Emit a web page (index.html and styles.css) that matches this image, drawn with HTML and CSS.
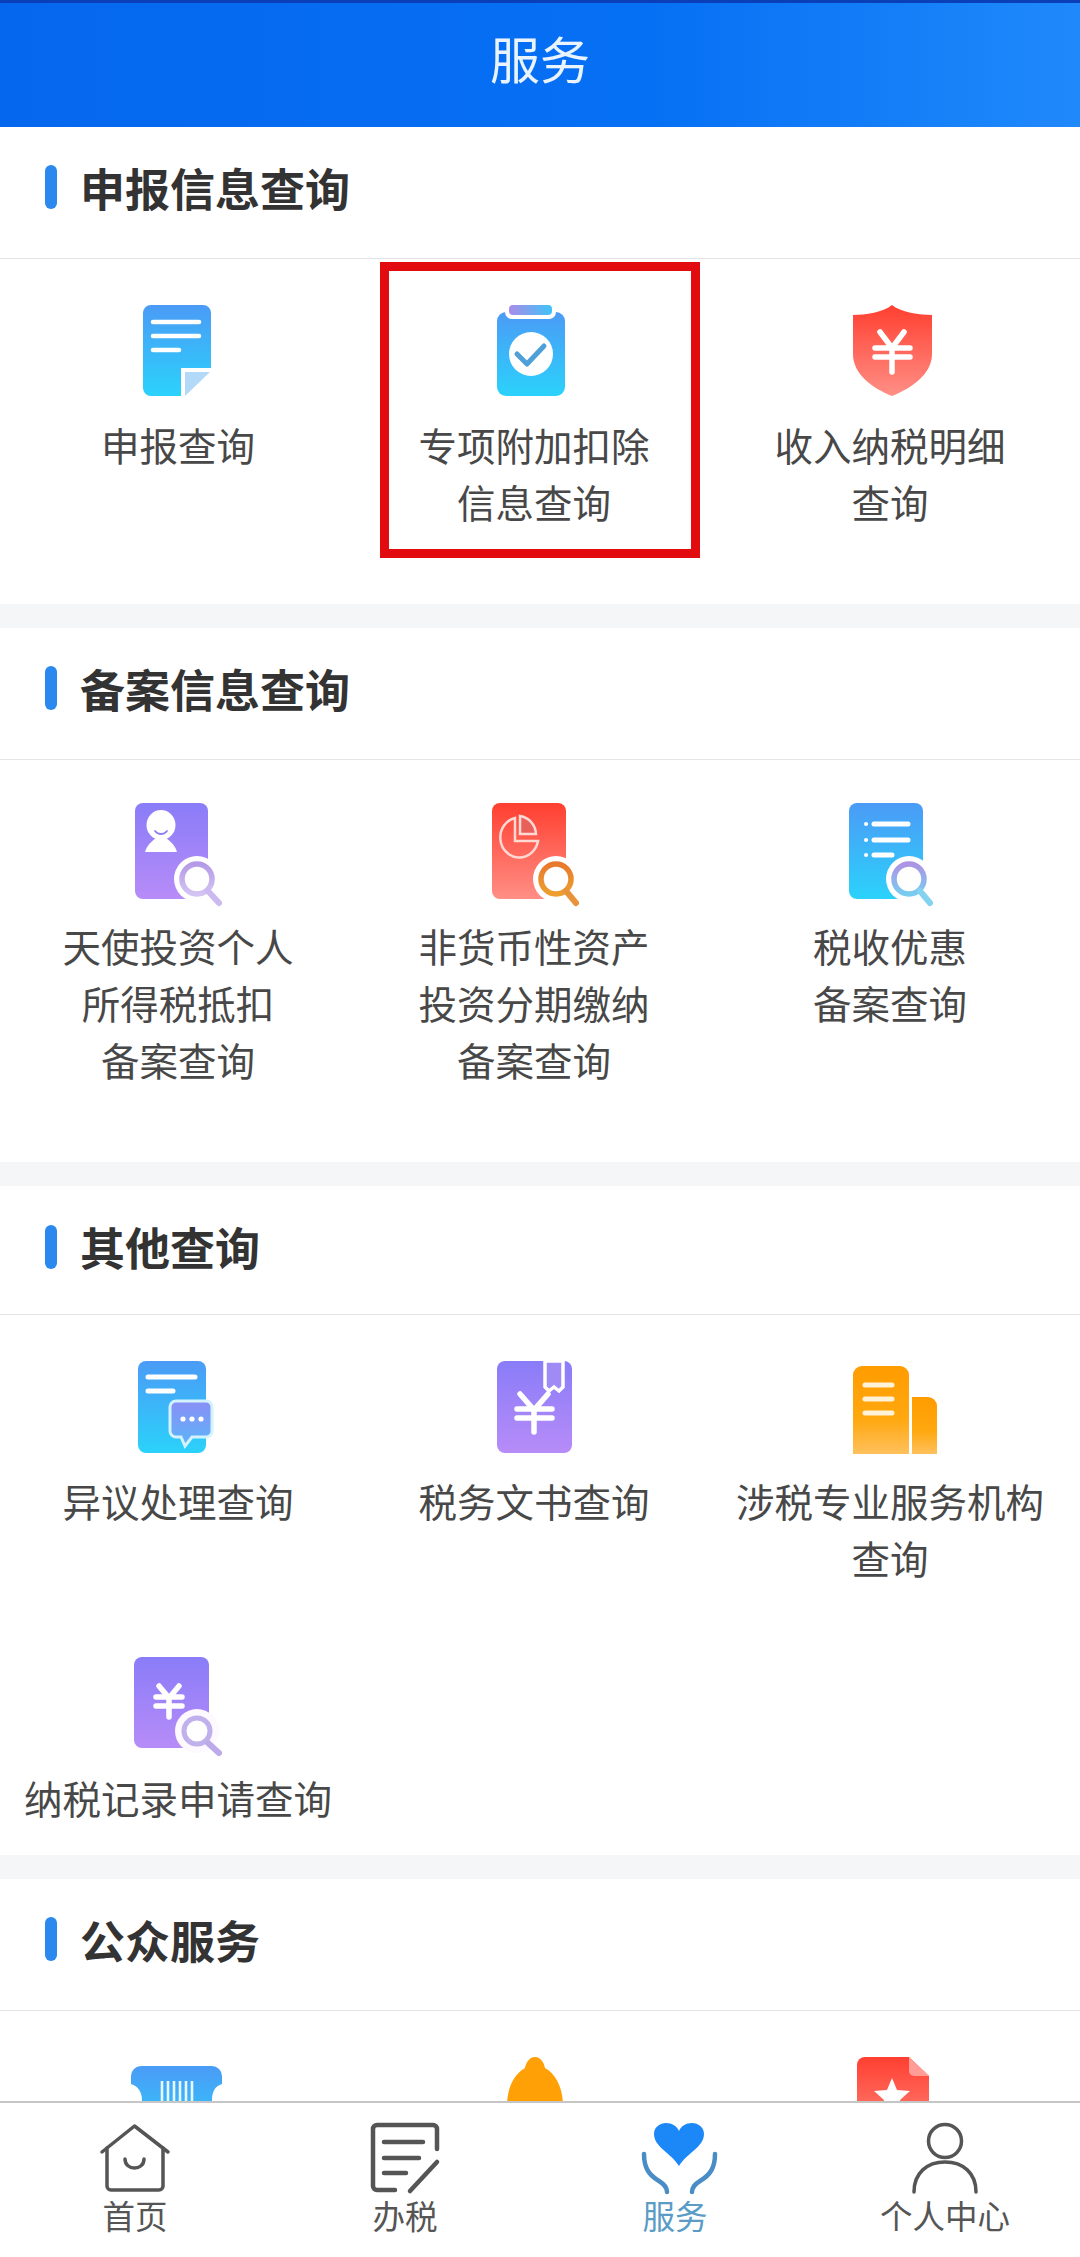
FILE: index.html
```html
<!DOCTYPE html>
<html lang="zh-CN">
<head>
<meta charset="utf-8">
<title>服务</title>
<link rel="stylesheet" href="styles.css">
</head>
<body>
<svg class="defs" aria-hidden="true">
  <defs>
    <linearGradient id="gBlue" x1="0" y1="0" x2="0" y2="1"><stop offset="0" stop-color="#4b9bf6"/><stop offset="1" stop-color="#2bd2fb"/></linearGradient>
    <linearGradient id="gPurple" x1="0" y1="0" x2="0" y2="1"><stop offset="0" stop-color="#8a7cf8"/><stop offset="1" stop-color="#b78cf8"/></linearGradient>
    <linearGradient id="gRed" x1="0" y1="0" x2="0" y2="1"><stop offset="0" stop-color="#ff3f30"/><stop offset="1" stop-color="#ff8f86"/></linearGradient>
    <linearGradient id="gOrange" x1="0" y1="0" x2="0" y2="1"><stop offset="0" stop-color="#ff9c00"/><stop offset=".6" stop-color="#ffa80f"/><stop offset="1" stop-color="#ffc05c"/></linearGradient>
    <linearGradient id="gClip" x1="0" y1="0" x2="1" y2="0"><stop offset="0" stop-color="#a98be8"/><stop offset="1" stop-color="#3fc4f8"/></linearGradient>
    <linearGradient id="gBubble" x1="0" y1="0" x2="0" y2="1"><stop offset="0" stop-color="#8a8ff6"/><stop offset="1" stop-color="#5cb4f8"/></linearGradient>
    <linearGradient id="gLens" x1="0" y1="0" x2="0" y2="1"><stop offset="0" stop-color="#b49ae6"/><stop offset="1" stop-color="#d3c4f3"/></linearGradient>
    <linearGradient id="gLensOrange" x1="0" y1="0" x2="0" y2="1"><stop offset="0" stop-color="#e8782e"/><stop offset="1" stop-color="#eda02e"/></linearGradient>
    <linearGradient id="gLensBlue" x1="0" y1="0" x2="0" y2="1"><stop offset="0" stop-color="#ad93e4"/><stop offset="1" stop-color="#78cdf0"/></linearGradient>
  </defs>
</svg>

<div class="app">
  <header class="topbar"><h1 class="topbar-title">服务</h1></header>

  <main class="scroll">
    <section class="section">
      <h2 class="section-head"><span class="section-bar"></span>申报信息查询</h2>
      <div class="grid">
        <a class="item">
          <svg class="item-icon" viewBox="0 0 120 110">
            <path d="M33 1H85a8 8 0 0 1 8 8V64H63V92H33a8 8 0 0 1-8-8V9a8 8 0 0 1 8-8z" fill="url(#gBlue)"/>
            <path d="M67 68H92L67 92z" fill="#b2daf8"/>
            <path d="M35 18H81M35 32H81M35 46H61" class="w-line" stroke-width="4.5"/>
          </svg>
          <span class="item-label">申报查询</span>
        </a>
        <a class="item item--marked">
          <svg class="item-icon" viewBox="0 0 120 110">
            <rect x="23" y="8" width="68" height="84" rx="9" fill="url(#gBlue)"/>
            <rect x="31" y="-3" width="51" height="18" rx="7" fill="#fff"/>
            <rect x="35" y="1" width="43" height="10" rx="4" fill="url(#gClip)"/>
            <circle cx="57" cy="50" r="22" fill="#fff"/>
            <path d="M43 50L53 60L70 42" fill="none" stroke="#4f9fd8" stroke-width="5" stroke-linecap="round" stroke-linejoin="round"/>
          </svg>
          <span class="item-label">专项附加扣除<br>信息查询</span>
        </a>
        <a class="item">
          <svg class="item-icon" viewBox="0 0 120 110">
            <path d="M62 1C70 8 90 11 102 11V50C102 70 82 84 62 92C42 84 23 70 23 50V11C35 11 54 8 62 1Z" fill="url(#gRed)"/>
            <path d="M50 28L62 44L74 28M45 44H80M45 53H80M62 44V68" class="w-line" stroke-width="5.5"/>
          </svg>
          <span class="item-label">收入纳税明细<br>查询</span>
        </a>
      </div>
    </section>

    <section class="section">
      <h2 class="section-head"><span class="section-bar"></span>备案信息查询</h2>
      <div class="grid">
        <a class="item">
          <svg class="item-icon" viewBox="0 2 120 110">
            <rect x="17" y="0" width="73" height="96" rx="8" fill="url(#gPurple)"/>
            <ellipse cx="43" cy="22" rx="14.5" ry="15" fill="#fff"/>
            <path d="M27 49C29 42 34 38 38 35H48C52 38 57 42 59 49z" fill="#fff"/>
            <path d="M37 28C40 32 46 32 49 28" fill="none" stroke="#8f80f0" stroke-width="1.8" stroke-linecap="round"/>
            <circle cx="79" cy="76" r="23" fill="#fff"/>
            <circle cx="79" cy="76" r="15" fill="#fff" stroke="url(#gLens)" stroke-width="5.5"/>
            <path d="M90 88L101 100" fill="none" stroke="#cbb9f0" stroke-width="6" stroke-linecap="round"/>
          </svg>
          <span class="item-label">天使投资个人<br>所得税抵扣<br>备案查询</span>
        </a>
        <a class="item">
          <svg class="item-icon" viewBox="0 2 120 110">
            <rect x="18" y="0" width="74" height="96" rx="8" fill="url(#gRed)"/>
            <path d="M41 15A19 20 0 1 0 64 38H41z" fill="none" stroke="#ffd9d4" stroke-width="2.5"/>
            <path d="M46 13A19 19 0 0 1 62 31H46z" fill="#e8605a" stroke="#ffd9d4" stroke-width="2.5"/>
            <circle cx="82" cy="76" r="23" fill="#fff"/>
            <circle cx="82" cy="76" r="15" fill="#fff" stroke="url(#gLensOrange)" stroke-width="5.5"/>
            <path d="M92 88L102 100" fill="none" stroke="#e8923a" stroke-width="6" stroke-linecap="round"/>
          </svg>
          <span class="item-label">非货币性资产<br>投资分期缴纳<br>备案查询</span>
        </a>
        <a class="item">
          <svg class="item-icon" viewBox="0 2 120 110">
            <rect x="19" y="0" width="74" height="96" rx="8" fill="url(#gBlue)"/>
            <path d="M44 21H78M44 37H78M44 52H62" class="w-line" stroke-width="5"/>
            <path d="M36 21h.1M36 37h.1M36 52h.1" class="w-line" stroke-width="4"/>
            <circle cx="79" cy="76" r="23" fill="#fff"/>
            <circle cx="79" cy="76" r="15" fill="#fff" stroke="url(#gLensBlue)" stroke-width="5.5"/>
            <path d="M90 88L100 100" fill="none" stroke="#83d2f0" stroke-width="6" stroke-linecap="round"/>
          </svg>
          <span class="item-label">税收优惠<br>备案查询</span>
        </a>
      </div>
    </section>

    <section class="section section--flush">
      <h2 class="section-head"><span class="section-bar"></span>其他查询</h2>
      <div class="grid">
        <a class="item">
          <svg class="item-icon" viewBox="0 0 120 110">
            <rect x="20" y="1" width="68" height="92" rx="8" fill="url(#gBlue)"/>
            <path d="M30 17H77M30 31H55" class="w-line" stroke-width="5"/>
            <path d="M58 41H88a6 6 0 0 1 6 6V71a6 6 0 0 1-6 6H74L67 86L63 77H58a6 6 0 0 1-6-6V47a6 6 0 0 1 6-6z" fill="url(#gBubble)" stroke="#d2f2fd" stroke-width="3"/>
            <circle cx="65" cy="59" r="2.6" fill="#fff"/><circle cx="74" cy="59" r="2.6" fill="#fff"/><circle cx="83" cy="59" r="2.6" fill="#fff"/>
          </svg>
          <span class="item-label">异议处理查询</span>
        </a>
        <a class="item">
          <svg class="item-icon" viewBox="0 0 120 110">
            <rect x="23" y="1" width="75" height="92" rx="8" fill="url(#gPurple)"/>
            <path d="M71 1V27L75 31L80 27L85 31L89 27V1z" fill="#9f8af6" stroke="#fff" stroke-width="3.5"/>
            <path d="M46 34L60 50L74 34M43 49H78M43 58H78M60 50V72" class="w-line" stroke-width="5.5"/>
          </svg>
          <span class="item-label">税务文书查询</span>
        </a>
        <a class="item">
          <svg class="item-icon" viewBox="0 0 120 110">
            <path d="M23 94V15a9 9 0 0 1 9-9H70a9 9 0 0 1 9 9V94z" fill="url(#gOrange)"/>
            <path d="M82 94V37H98a9 9 0 0 1 9 9V94z" fill="url(#gOrange)"/>
            <path d="M35 25H62M35 39H62M35 53H62" class="w-line w-line--soft" stroke-width="5"/>
          </svg>
          <span class="item-label">涉税专业服务机构<br>查询</span>
        </a>
        <a class="item">
          <svg class="item-icon" viewBox="0 0 120 110">
            <rect x="16" y="0" width="75" height="91" rx="8" fill="url(#gPurple)"/>
            <path d="M41 29L51 41L61 29M38 40H64M38 49H64M51 41V60" class="w-line" stroke-width="5.5"/>
            <circle cx="79" cy="74" r="22" fill="#fdf9ff"/>
            <circle cx="79" cy="74" r="13" fill="#fff" stroke="#c0b0ec" stroke-width="5"/>
            <path d="M90 86L101 96" fill="none" stroke="#bcaaea" stroke-width="6" stroke-linecap="round"/>
          </svg>
          <span class="item-label">纳税记录申请查询</span>
        </a>
      </div>
    </section>

    <section class="section">
      <h2 class="section-head"><span class="section-bar"></span>公众服务</h2>
      <div class="grid">
        <div class="item">
          <svg class="item-icon" viewBox="0 0 120 110">
            <path d="M23 10H94a10 10 0 0 1 10 10V28C97 30 94 36 94 44V90H24V44C24 36 20 30 13 28V20a10 10 0 0 1 10-10z" fill="url(#gBlue)"/>
            <path d="M44 25V60M50 25V60M56 25V60M62 25V60M68 25V60M74 25V60" fill="none" stroke="#e6f7fe" stroke-width="2.6"/>
          </svg>
        </div>
        <div class="item">
          <svg class="item-icon" viewBox="0 0 120 110">
            <path d="M61 1C67 1 70 7 71 12C82 18 89 32 89 50V90H33V50C33 32 40 18 51 12C52 7 55 1 61 1z" fill="#ffa006"/>
          </svg>
        </div>
        <div class="item">
          <svg class="item-icon" viewBox="0 0 120 110">
            <path d="M35 1H79L99 20V90H27V9a8 8 0 0 1 8-8z" fill="url(#gRed)"/>
            <path d="M79 1L99 20H84a5 5 0 0 1-5-5z" fill="#ff9d96"/>
            <path d="M62 22L67 34L80 35L70 44L73 58L62 50L51 58L54 44L44 35L57 34z" fill="#fff"/>
          </svg>
        </div>
      </div>
    </section>
  </main>

  <nav class="tabbar">
    <a class="tab">
      <svg class="tab-icon" viewBox="-5 0 90 72">
        <path d="M7 29L39.5 3L73 29" class="t-line"/>
        <path d="M12 25V63a4 4 0 0 0 4 4H64a4 4 0 0 0 4-4V25" class="t-line"/>
        <path d="M30 36C30 48 49 48 49 36" class="t-line"/>
      </svg>
      <span class="tab-label">首页</span>
    </a>
    <a class="tab">
      <svg class="tab-icon" viewBox="-5 0 90 72">
        <path d="M72 26V6a4 4 0 0 0-4-4H12a4 4 0 0 0-4 4V63a4 4 0 0 0 4 4H30" class="t-line t-line--bold"/>
        <path d="M19 19H58M19 35H54M19 50H41" class="t-line t-line--bold"/>
        <path d="M72 39L45 68" class="t-line t-line--bold"/>
      </svg>
      <span class="tab-label">办税</span>
    </a>
    <a class="tab tab--active">
      <svg class="tab-icon" viewBox="-5 0 90 72">
        <path d="M44 43C36 30 19 24 19 11C19 4 25 0 31 0C37 0 42 3 44 8C46 3 51 0 57 0C63 0 69 4 69 11C69 24 52 30 44 43Z" fill="#1c88f8"/>
        <path d="M9 31C9 45 14 52 24 58C29 61 32 64 32 69" class="t-line t-line--hand"/>
        <path d="M80 31C80 45 75 52 65 58C60 61 57 64 57 69" class="t-line t-line--hand"/>
      </svg>
      <span class="tab-label">服务</span>
    </a>
    <a class="tab">
      <svg class="tab-icon" viewBox="-5 0 90 72">
        <circle cx="40" cy="18" r="16.5" class="t-line"/>
        <path d="M9 69C9 50 22 39 40 39C58 39 71 50 71 69" class="t-line"/>
      </svg>
      <span class="tab-label">个人中心</span>
    </a>
  </nav>
</div>
</body>
</html>
```
FILE: styles.css
```css
* { box-sizing: border-box; }

html, body {
  margin: 0;
  padding: 0;
  height: 100%;
}

body {
  font-family: "Noto Sans CJK SC", "Noto Sans", sans-serif;
  background: #fff;
  color: #333;
}

.defs {
  position: absolute;
  width: 0;
  height: 0;
}

.app {
  width: 1080px;
  height: 2257px;
  display: flex;
  flex-direction: column;
  overflow: hidden;
}

.topbar {
  flex: none;
  height: 127px;
  border-top: 3px solid #0b3fb8;
  padding-bottom: 17px;
  background: linear-gradient(90deg, #0567ee 0%, #0670f4 60%, #1f89fb 100%);
  display: flex;
  align-items: center;
  justify-content: center;
}

.topbar-title {
  margin: 0;
  font-size: 50px;
  font-weight: 400;
  line-height: 1;
  color: #eaf4ff;
}

.scroll {
  flex: 1;
  min-height: 0;
  overflow: hidden;
  background: #f5f6f8;
  display: flex;
  flex-direction: column;
  gap: 24px;
}

.section {
  flex: none;
  background: #fff;
  padding-bottom: 48px;
}

.section--flush {
  padding-bottom: 3px;
}

.section-head {
  margin: 0;
  height: 132px;
  padding: 0 0 11px 45px;
  display: flex;
  align-items: center;
  gap: 23px;
  font-size: 45px;
  font-weight: 700;
  color: #333;
  border-bottom: 1px solid #e4e4e4;
}

.section--flush .section-head {
  height: 129px;
  padding-bottom: 7px;
}

.section-bar {
  width: 12px;
  height: 44px;
  border-radius: 6px;
  background: #2a88ee;
}

.grid {
  display: grid;
  grid-template-columns: repeat(3, 356px);
}

.item {
  position: relative;
  display: flex;
  flex-direction: column;
  align-items: center;
  padding: 45px 0 26px;
  text-align: center;
}

.item--marked::after {
  content: "";
  box-sizing: border-box;
  position: absolute;
  left: 24px;
  top: 3px;
  width: 320px;
  height: 296px;
  border: 9px solid #e20c10;
}

.item-icon {
  display: block;
  width: 120px;
  height: 110px;
  margin-bottom: 2px;
  overflow: visible;
}

.item-label {
  font-size: 38.5px;
  line-height: 57px;
  color: #484848;
  white-space: nowrap;
}

.w-line {
  fill: none;
  stroke: #fff;
  stroke-linecap: round;
  stroke-linejoin: miter;
}

.w-line--soft {
  stroke: #fff2d8;
}

.tabbar {
  flex: none;
  height: 156px;
  border-top: 2px solid #c6c6c6;
  background: #fff;
  display: grid;
  grid-template-columns: repeat(4, 270px);
  padding-top: 20px;
}

.tab {
  display: flex;
  flex-direction: column;
  align-items: center;
}

.tab-icon {
  display: block;
  width: 90px;
  height: 72px;
  margin-bottom: 0;
  overflow: visible;
}

.tab-label {
  font-size: 32.5px;
  line-height: 40px;
  color: #555;
}

.tab--active .tab-label {
  color: #5a9cc6;
}

.t-line {
  fill: none;
  stroke: #555;
  stroke-width: 3.5;
  stroke-linecap: round;
  stroke-linejoin: round;
}

.t-line--bold {
  stroke-width: 4.5;
}

.t-line--hand {
  stroke: #4a8cc6;
  stroke-width: 4.5;
}
```
